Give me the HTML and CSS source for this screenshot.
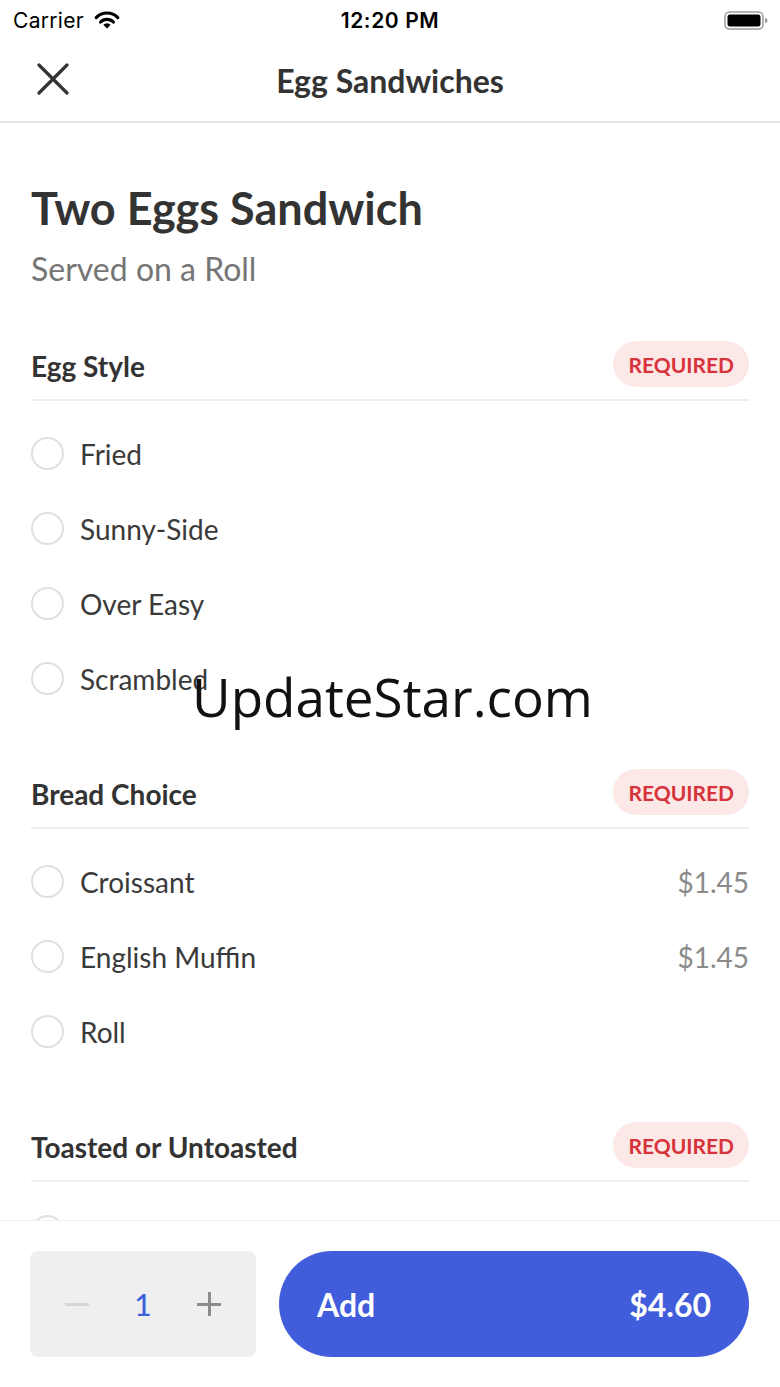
FILE: index.html
```html
<!DOCTYPE html>
<html>
<head>
<meta charset="utf-8">
<link rel="stylesheet" href="styles.css">
</head>
<body>
<div class="page">
  <div class="status">
    <div class="status-left">
      <span class="carrier">Carrier</span>
      <svg class="wifi" width="28" height="20" viewBox="0 0 28 20">
        <path d="M3.2 8.6 A15 15 0 0 1 24.8 8.6" fill="none" stroke="#000" stroke-width="3.2" stroke-linecap="round"/>
        <path d="M7.6 13 A9 9 0 0 1 20.4 13" fill="none" stroke="#000" stroke-width="3.2" stroke-linecap="round"/>
        <path d="M14 19.5 L10.3 15.8 A5.2 5.2 0 0 1 17.7 15.8 Z" fill="#000"/>
      </svg>
    </div>
    <div class="time">12:20 PM</div>
    <div class="status-right">
      <svg width="44" height="22" viewBox="0 0 44 22">
        <rect x="1" y="2" width="38" height="17" rx="4.5" fill="none" stroke="#9a9a9a" stroke-width="1.5"/>
        <rect x="3.5" y="4.5" width="33" height="12" rx="2.5" fill="#000"/>
        <path d="M41 8 a2.5 2.5 0 0 1 0 5 Z" fill="#9a9a9a"/>
      </svg>
    </div>
  </div>

  <div class="nav">
    <svg class="close" width="32" height="32" viewBox="0 0 32 32">
      <path d="M2 2 L30 30 M30 2 L2 30" stroke="#333" stroke-width="3.2" stroke-linecap="round"/>
    </svg>
    <div class="nav-title">Egg Sandwiches</div>
  </div>

  <div class="content">
    <h1 class="title">Two Eggs Sandwich</h1>
    <div class="subtitle">Served on a Roll</div>

    <div class="section">
      <div class="section-head">
        <div class="section-name">Egg Style</div>
        <div class="badge">REQUIRED</div>
      </div>
      <div class="options">
        <div class="option"><span class="radio"></span><span class="label">Fried</span></div>
        <div class="option"><span class="radio"></span><span class="label">Sunny-Side</span></div>
        <div class="option"><span class="radio"></span><span class="label">Over Easy</span></div>
        <div class="option"><span class="radio"></span><span class="label">Scrambled</span></div>
      </div>
    </div>

    <div class="section">
      <div class="section-head">
        <div class="section-name">Bread Choice</div>
        <div class="badge">REQUIRED</div>
      </div>
      <div class="options">
        <div class="option"><span class="radio"></span><span class="label">Croissant</span><span class="price">$1.45</span></div>
        <div class="option"><span class="radio"></span><span class="label">English Muffin</span><span class="price">$1.45</span></div>
        <div class="option"><span class="radio"></span><span class="label">Roll</span></div>
      </div>
    </div>

    <div class="section">
      <div class="section-head">
        <div class="section-name">Toasted or Untoasted</div>
        <div class="badge">REQUIRED</div>
      </div>
      <div class="options options-peek">
        <div class="option"><span class="radio"></span></div>
      </div>
    </div>
  </div>

  <div class="footer">
    <div class="stepper">
      <span class="minus"></span>
      <span class="qty">1</span>
      <span class="plus"></span>
    </div>
    <div class="add-btn">
      <span>Add</span>
      <span>$4.60</span>
    </div>
  </div>

  <div class="watermark">UpdateStar.com</div>
</div>
</body>
</html>
```

FILE: styles.css
```css
* { box-sizing: border-box; }
html, body { margin: 0; padding: 0; background: #fff; }
.page {
  position: relative;
  width: 780px;
  height: 1387px;
  display: flex;
  flex-direction: column;
  overflow: hidden;
  font-family: Lato, "Open Sans", sans-serif;
  color: #333;
}
.status {
  height: 40px;
  flex: none;
  display: flex;
  align-items: center;
  justify-content: space-between;
  padding: 0 12px 0 13px;
  font-family: Inter, "Liberation Sans", sans-serif;
  color: #000;
  position: relative;
}
.status-left { display: flex; align-items: center; gap: 9px; }
.carrier { font-size: 21px; letter-spacing: 0.3px; }
.wifi { margin-top: -2px; }
.time {
  position: absolute;
  left: 0; right: 0;
  text-align: center;
  font-size: 21px;
  font-weight: 600;
  letter-spacing: 0.6px;
  pointer-events: none;
}
.status-right { display: flex; align-items: center; padding-top: 1px; }

.nav {
  height: 83px;
  flex: none;
  position: relative;
  display: flex;
  align-items: center;
  justify-content: center;
  border-bottom: 2px solid #e4e4e4;
}
.close { position: absolute; left: 37px; top: 23px; }
.nav-title { font-size: 32px; line-height: 38px; font-weight: 700; color: #333; }

.content {
  flex: 1;
  overflow: hidden;
  padding: 58px 31px 0 31px;
}
.title {
  margin: 0;
  font-size: 45px;
  line-height: 54px;
  font-weight: 700;
  color: #333;
}
.subtitle {
  margin-top: 15px;
  font-size: 32px;
  line-height: 38px;
  color: #757575;
}
.section { margin-top: 53px; }
.section:first-of-type { margin-top: 52px; }
.section-head {
  display: flex;
  align-items: center;
  justify-content: space-between;
  padding-bottom: 12px;
  border-bottom: 2px solid #eeeeee;
}
.section-name {
  font-size: 28px;
  font-weight: 700;
  color: #333;
  padding-top: 4px;
}
.badge {
  height: 46px;
  border-radius: 23px;
  background: #fde8e8;
  color: #d6343a;
  font-size: 21px;
  font-weight: 700;
  display: flex;
  align-items: center;
  padding: 0 15px;
}
.options { padding-top: 15px; }
.options-peek { padding-top: 12px; }
.option {
  height: 75px;
  display: flex;
  align-items: center;
}
.radio {
  width: 33px;
  height: 33px;
  border-radius: 50%;
  border: 2px solid #e0e0e0;
  flex: none;
}
.label {
  margin-left: 16px;
  font-size: 28px;
  color: #3a3a3a;
  flex: 1;
}
.price {
  font-size: 28px;
  color: #8a8a8a;
}

.footer {
  flex: none;
  height: 167px;
  border-top: 1px solid #f0f0f0;
  display: flex;
  gap: 23px;
  padding: 30px 31px 30px 30px;
  background: #fff;
}
.stepper {
  width: 226px;
  height: 106px;
  background: #efefef;
  border-radius: 8px;
  display: grid;
  grid-template-columns: 66px 66px 66px;
  align-items: center;
  justify-items: center;
  padding: 0 14px;
}
.minus {
  width: 24px;
  height: 3px;
  background: #d6d6d6;
}
.plus {
  position: relative;
  width: 24px;
  height: 24px;
}
.plus::before, .plus::after {
  content: "";
  position: absolute;
  background: #8c8c8c;
}
.plus::before { left: 0; right: 0; top: 10.5px; height: 3px; }
.plus::after { top: 0; bottom: 0; left: 10.5px; width: 3px; }
.qty {
  font-size: 30px;
  line-height: 36px;
  color: #3f5fdc;
  font-weight: 500;
}
.add-btn {
  flex: 1;
  height: 106px;
  border-radius: 53px;
  background: #415ddb;
  color: #fff;
  display: flex;
  align-items: center;
  justify-content: space-between;
  padding: 0 38px;
  font-size: 32px;
  font-weight: 700;
}

.watermark {
  position: absolute;
  left: 192px;
  top: 670px;
  font-family: "Open Sans", sans-serif;
  font-size: 53px;
  line-height: 1;
  color: #111;
  white-space: nowrap;
}
```
